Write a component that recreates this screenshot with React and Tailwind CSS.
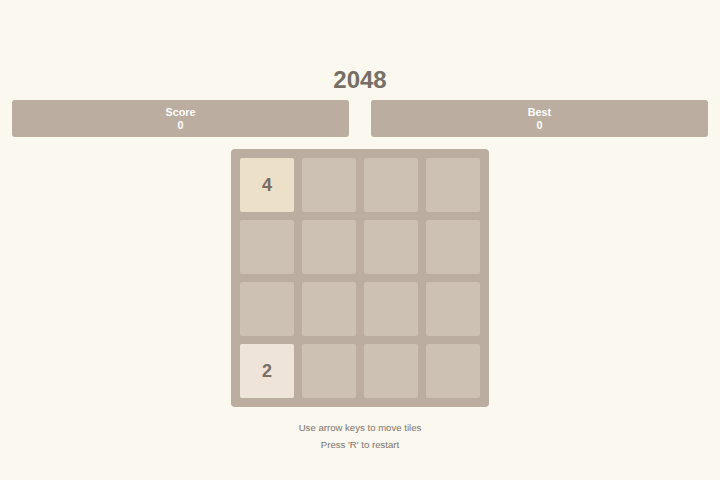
import React from 'react';

const board = [
  [4, 0, 0, 0],
  [0, 0, 0, 0],
  [0, 0, 0, 0],
  [2, 0, 0, 0],
];

const tileClass = (v) => {
  if (v === 2) return 'bg-[#eee4da] text-[#776e65]';
  if (v === 4) return 'bg-[#ede0c8] text-[#776e65]';
  return 'bg-[#cdc1b4]';
};

const ScoreBox = ({ label, value }) => (
  <div className="flex-1 bg-[#bbada0] rounded-[3px] pt-[6px] pb-[5px] text-center text-white font-bold text-[10.8px] leading-[13px]">
    <div>{label}</div>
    <div>{value}</div>
  </div>
);

export default function App() {
  return (
    <div
      className="min-h-[480px] bg-[#faf8ef] text-[#776e65] flex flex-col items-center"
      style={{ fontFamily: '"Liberation Sans", Arial, sans-serif' }}
    >
      <h1 className="mt-[66px] text-[24px] leading-[28px] font-bold text-[#776e65]">2048</h1>

      <div className="w-full flex gap-[22px] px-3 mt-[6px]">
        <ScoreBox label="Score" value="0" />
        <ScoreBox label="Best" value="0" />
      </div>

      <div className="mt-3 bg-[#bbada0] rounded-[4px] p-[9px] grid grid-cols-4 gap-2">
        {board.flat().map((v, i) => (
          <div
            key={i}
            className={`w-[54px] h-[54px] rounded-[2px] flex items-center justify-center text-[18px] font-bold ${tileClass(v)}`}
          >
            {v ? v : ''}
          </div>
        ))}
      </div>

      <div className="mt-[12px] text-center text-[9.6px] leading-[17px] text-[#7d746c]">
        <p>Use arrow keys to move tiles</p>
        <p>Press 'R' to restart</p>
      </div>
    </div>
  );
}
